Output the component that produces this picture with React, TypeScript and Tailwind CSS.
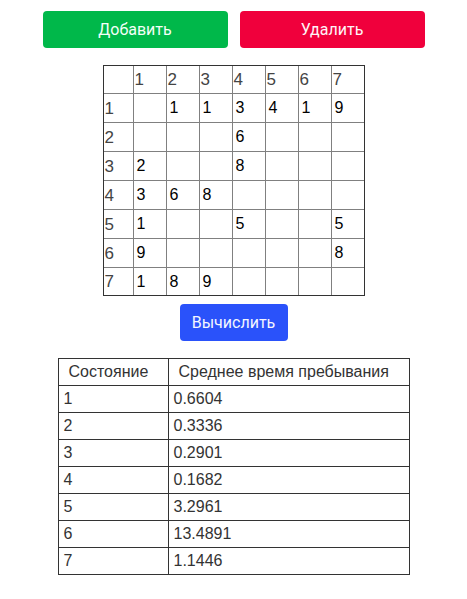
import React from "react";

const grid: string[][] = [
  ["", "1", "1", "3", "4", "1", "9"],
  ["", "", "", "6", "", "", ""],
  ["2", "", "", "8", "", "", ""],
  ["3", "6", "8", "", "", "", ""],
  ["1", "", "", "5", "", "", "5"],
  ["9", "", "", "", "", "", "8"],
  ["1", "8", "9", "", "", "", ""],
];

const results = ["0.6604", "0.3336", "0.2901", "0.1682", "3.2961", "13.4891", "1.1446"];

export default function App() {
  return (
    <div className="flex flex-col items-center bg-white min-h-[599px] pt-[11px] text-[#333]" style={{ fontFamily: '"Liberation Sans", Arial, sans-serif' }}>
      <div className="flex gap-3">
        <button
          className="w-[185px] h-[37px] rounded-[4px] bg-[#00b84a] text-[#f4fff8] text-[16px]"
          style={{ fontFamily: 'Roboto, sans-serif' }}
        >
          Добавить
        </button>
        <button
          className="w-[185px] h-[37px] rounded-[4px] bg-[#f0003c] text-[#fff4f6] text-[16px]"
          style={{ fontFamily: 'Roboto, sans-serif' }}
        >
          Удалить
        </button>
      </div>

      <div className="mt-[17px] border border-[#333] overflow-hidden">
        <table className="-m-px border-collapse text-[16px]">
          <tbody>
            <tr className="h-[28px]">
              <td className="w-[30px] border border-[#808080] p-0 pl-[1px] align-middle"></td>
              {[1, 2, 3, 4, 5, 6, 7].map((n) => (
                <td key={n} className="w-[33px] border border-[#808080] p-0 pl-[1px] text-[#444] align-middle leading-none text-[17px]">
                  {n}
                </td>
              ))}
            </tr>
            {grid.map((row, i) => (
              <tr key={i} className={i === 6 ? "h-[28px]" : "h-[29px]"}>
                <td className="border border-[#808080] p-0 pl-[1px] text-[#444] leading-none text-[17px]">{i + 1}</td>
                {row.map((v, j) => (
                  <td key={j} className="border border-[#808080] p-0 pl-[3px] text-black leading-none">
                    {v}
                  </td>
                ))}
              </tr>
            ))}
          </tbody>
        </table>
      </div>

      <button
        className="mt-[8px] w-[108px] h-[37px] rounded-[4px] bg-[#2a52fa] text-[#f4f6ff] text-[16px]"
        style={{ fontFamily: 'Roboto, sans-serif' }}
      >
        Вычислить
      </button>

      <table className="mt-[17px] w-[352px] border-collapse border border-[#333] text-[16px] text-[#333]">
        <thead>
          <tr className="h-[27px]">
            <th className="w-[110px] border border-[#333] px-[10px] text-left font-normal leading-none">Состояние</th>
            <th className="border border-[#333] px-[10px] text-left font-normal leading-none">Среднее время пребывания</th>
          </tr>
        </thead>
        <tbody>
          {results.map((r, i) => (
            <tr key={i} className="h-[27px]">
              <td className="border border-[#333] px-[5px] leading-none">{i + 1}</td>
              <td className="border border-[#333] px-[5px] leading-none">{r}</td>
            </tr>
          ))}
        </tbody>
      </table>
    </div>
  );
}
